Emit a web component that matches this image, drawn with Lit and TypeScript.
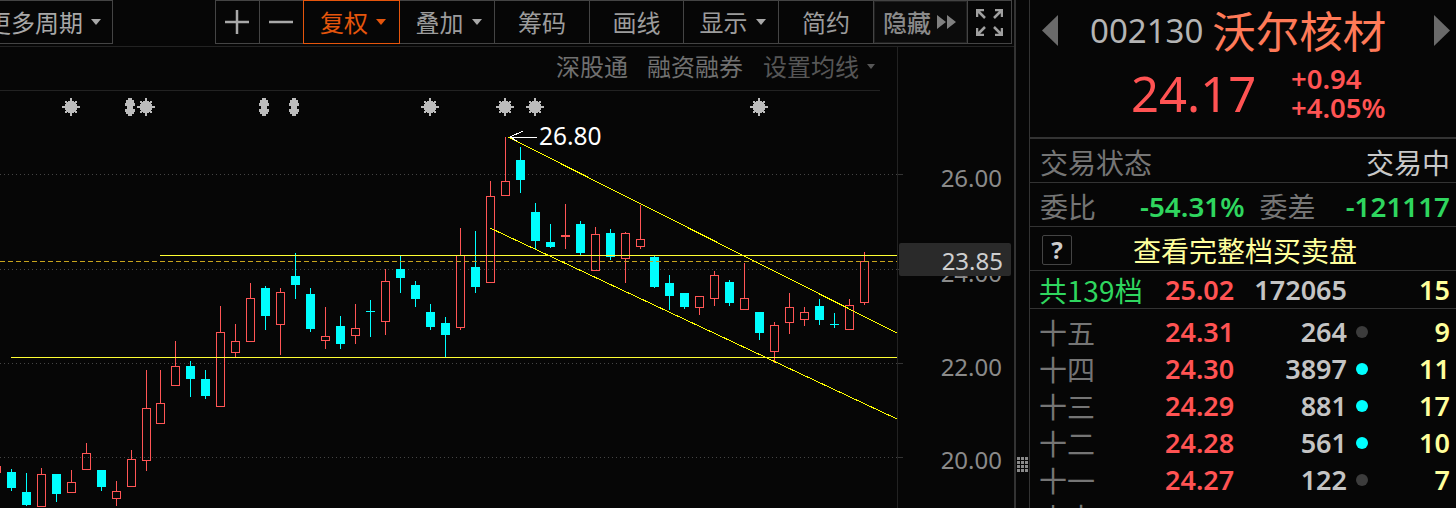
import { LitElement, html, css, svg } from "lit";
import { customElement } from "lit/decorators.js";
import { classMap } from "lit/directives/class-map.js";

type C = [number, number, number, number, number, "r" | "c" | "rd" | "cx"];

const seg = (xo: number, yo: number, list: C[]) =>
  list.map(([x, h, t, b, l, k]) => ({
    x: Math.floor(xo + x / 3) + 0.5,
    h: Math.round(yo + h / 3),
    t: Math.round(yo + t / 3),
    b: Math.round(yo + b / 3),
    l: Math.round(yo + l / 3),
    k,
  }));

const CANDLES = [
  ...seg(0, 240, [
    [-12, 678, 678, 695, 695, "r"],
    [34, 687, 696, 744, 752, "c"],
    [79, 699, 756, 795, 798, "c"],
    [124, 684, 703, 797, 797, "r"],
    [169, 702, 702, 762, 786, "c"],
    [214, 690, 727, 755, 755, "r"],
    [259, 609, 640, 686, 690, "r"],
    [304, 690, 690, 741, 753, "c"],
    [349, 723, 754, 773, 798, "r"],
    [394, 630, 657, 737, 737, "r"],
    [439, 390, 505, 659, 693, "r"],
    [481, 390, 490, 548, 548, "r"],
    [526, 303, 379, 434, 434, "r"],
    [571, 363, 378, 417, 471, "c"],
    [616, 390, 417, 468, 477, "c"],
    [661, 198, 277, 497, 497, "r"],
    [706, 252, 304, 335, 352, "r"],
    [751, 129, 175, 302, 302, "r"],
    [796, 138, 144, 228, 270, "c"],
    [841, 144, 157, 251, 345, "r"],
  ]),
  ...seg(290, 130, [
    [16, 369, 438, 465, 507, "c"],
    [61, 474, 492, 597, 606, "c"],
    [106, 531, 619, 629, 657, "r"],
    [151, 558, 588, 642, 657, "c"],
    [196, 522, 595, 614, 642, "r"],
    [241, 510, 544, 544, 621, "cx"],
    [286, 418, 454, 572, 615, "r"],
    [331, 378, 417, 444, 489, "c"],
    [376, 453, 465, 507, 531, "c"],
    [421, 522, 546, 591, 600, "c"],
    [466, 561, 579, 615, 682, "c"],
    [511, 294, 376, 590, 600, "r"],
    [556, 303, 411, 471, 489, "c"],
    [601, 153, 199, 455, 455, "r"],
    [646, 22, 154, 194, 194, "r"],
    [691, 52, 90, 150, 189, "c"],
    [736, 219, 246, 333, 360, "c"],
    [781, 282, 336, 351, 354, "c"],
    [826, 222, 315, 320, 357, "rd"],
    [871, 273, 282, 369, 375, "c"],
  ]),
  ...seg(590, 190, [
    [16, 111, 133, 239, 239, "r"],
    [61, 117, 129, 201, 210, "c"],
    [106, 126, 130, 203, 279, "r"],
    [151, 45, 148, 167, 177, "r"],
    [193, 198, 201, 291, 294, "c"],
    [238, 255, 279, 318, 360, "c"],
    [283, 309, 309, 351, 357, "c"],
    [328, 319, 319, 350, 375, "r"],
    [373, 243, 256, 323, 348, "r"],
    [418, 270, 276, 339, 348, "c"],
    [463, 219, 325, 356, 356, "r"],
    [508, 366, 366, 429, 450, "c"],
    [553, 396, 406, 482, 518, "r"],
    [598, 309, 352, 395, 432, "r"],
    [643, 351, 367, 386, 408, "r"],
    [688, 327, 348, 390, 405, "c"],
    [733, 369, 403, 403, 414, "cx"],
    [778, 327, 346, 416, 420, "r"],
    [823, 186, 214, 335, 345, "r"],
  ]),
];

const STARS = [71, 146, 430, 505, 535, 759];
const CAPS = [130, 264, 294];
const GRID = [174.5, 269.5, 363.5, 457.5];
const AXIS = [
  { y: 187, t: "26.00" },
  { y: 282, t: "24.00" },
  { y: 376, t: "22.00" },
  { y: 469, t: "20.00" },
];

const TOOLS = [
  { t: "复权", w: "w96", on: true, caret: true },
  { t: "叠加", w: "w95", caret: true },
  { t: "筹码", w: "w95" },
  { t: "画线", w: "w94" },
  { t: "显示", w: "w95", caret: true },
  { t: "简约", w: "w95" },
];

const BOOK = [
  { n: "十五", p: "24.31", q: "264", d: 0, c: "9" },
  { n: "十四", p: "24.30", q: "3897", d: 1, c: "11" },
  { n: "十三", p: "24.29", q: "881", d: 1, c: "17" },
  { n: "十二", p: "24.28", q: "561", d: 1, c: "10" },
  { n: "十一", p: "24.27", q: "122", d: 0, c: "7" },
  { n: "卖十", p: "24.26", q: "588", d: 0, c: "17" },
];

@customElement("app-root")
export class AppRoot extends LitElement {
  static styles = css`
    :host {
      display: block;
      width: 1456px;
      height: 508px;
      overflow: hidden;
      background: #060606;
      font-family: "Noto Sans CJK SC", "Noto Sans", sans-serif;
      color: #999;
    }
    .app {
      display: flex;
      height: 508px;
    }
    .main {
      width: 1014px;
      flex: none;
      border-right: 2px solid #333;
      display: flex;
      flex-direction: column;
    }
    .toolbar {
      height: 47px;
      flex: none;
      box-sizing: border-box;
      border-bottom: 1px solid #222;
      display: flex;
    }
    .btn {
      height: 44px;
      box-sizing: border-box;
      border: 1px solid #444;
      margin-left: -1px;
      display: flex;
      align-items: center;
      justify-content: center;
      gap: 8px;
      font-size: 24px;
      line-height: 1;
      color: #9c9c9c;
      flex: none;
      white-space: nowrap;
    }
    .carets { padding-left: 3px; }
    .period {
      width: 113px;
      margin-left: 0;
      border-left: none;
      justify-content: flex-end;
      padding-right: 11px;
      margin-right: 103px;
      color: #a8a8a8;
      overflow: hidden;
    }
    .period span { flex: none; }
    .w44 { width: 45px; }
    .plus { padding-right: 2px; }
    .w94 { width: 95px; }
    .w95 { width: 96px; }
    .w96 { width: 97px; }
    .on {
      border-color: #e5550c;
      color: #e5550c;
      position: relative;
    }
    .hide {
      width: 95px;
      background: #0b0b0b;
      box-shadow: inset 0 0 0 1px #1e1e1e;
      color: #8a8a8a;
      gap: 6px;
      font-weight: 500;
      padding-right: 2px;
    }
    .full { width: 45px; }
    .caret {
      width: 0;
      height: 0;
      border-left: 5px solid transparent;
      border-right: 5px solid transparent;
      border-top: 6px solid #a8a8a8;
      flex: none;
    }
    .on .caret { border-top-color: #e5550c; }
    .subbar {
      height: 44px;
      width: 898px;
      flex: none;
      box-sizing: border-box;
      border-right: 1px solid #222;
    }
    .subrow {
      width: 880px;
      height: 44px;
      box-sizing: border-box;
      border-bottom: 1px solid #222;
      display: flex;
      align-items: center;
      justify-content: flex-end;
      padding: 0 5px 5px 0;
      font-size: 24px;
      line-height: 1;
      color: #707070;
    }
    .subrow span + span { margin-left: 19px; }
    .subrow .dim { margin-left: 20px; color: #565656; display: flex; align-items: center; gap: 8px; }
    .dim .caret { border-top-color: #565656; border-left-width: 4px; border-right-width: 4px; border-top-width: 5px; }
    .chart {
      width: 1014px;
      height: 417px;
      display: block;
      flex: none;
    }
    .ax { font: 24px "Noto Sans", sans-serif; fill: #8a8a8a; text-anchor: end; }
    .ax.now { fill: #cfcfcf; }
    .hi { font: 24.5px "Noto Sans", sans-serif; fill: #fff; }
    .strip {
      width: 13px;
      flex: none;
      border-right: 1px solid #333;
      padding-top: 457px;
      box-sizing: content-box;
    }
    .grip {
      display: grid;
      grid-template-columns: repeat(3, 3px);
      grid-auto-rows: 3px;
      gap: 1px;
      justify-content: center;
    }
    .grip i { background: #8a8a8a; }
    .side {
      flex: 1;
      min-width: 0;
      display: flex;
      flex-direction: column;
    }
    .head {
      height: 60px;
      flex: none;
      display: flex;
      align-items: center;
      padding: 0 6px 0 12px;
    }
    .code {
      font: 33px "Noto Sans", sans-serif;
      color: #b4b4b4;
      margin-left: 32px;
    }
    .name {
      font-size: 43.5px;
      line-height: 1;
      color: #ff7a58;
      margin-left: 9px;
    }
    .push { flex: 1; }
    .quote {
      height: 79px;
      flex: none;
      box-sizing: border-box;
      border-bottom: 2px solid #333;
      display: flex;
      align-items: center;
      padding: 0 0 11px 101px;
      color: #ff5353;
      font-family: "Noto Sans", sans-serif;
    }
    .price { font-size: 49px; line-height: 1; width: 160px; }
    .delta { font-size: 27.5px; font-weight: 600; line-height: 29px; }
    .row {
      height: 44px;
      flex: none;
      box-sizing: border-box;
      border-bottom: 1px solid #333;
      display: flex;
      align-items: center;
      padding: 2px 6px 0 10px;
      font-size: 28px;
      line-height: 1;
      color: #757575;
    }
    .row .num { font: 600 27.8px "Noto Sans", sans-serif; color: #2fd65f; }
    .mid { margin-left: auto; }
    .gap44 { margin-left: 44px; }
    .gap15 { margin-left: 15px; }
    .white { color: #c8c8c8; margin-left: auto; }
    .help {
      width: 30px;
      height: 30px;
      box-sizing: border-box;
      border: 1px solid #444;
      border-radius: 2px;
      margin-left: 2px;
      color: #ccc;
      font: 700 24px "Noto Sans", sans-serif;
      display: flex;
      align-items: center;
      justify-content: center;
    }
    .all { color: #ffff9c; margin-left: 61px; }
    .book {
      display: grid;
      grid-template-columns: 125px 70px 112px 30px 1fr;
      align-items: center;
      padding: 0 6px 0 10px;
      font: 600 27px/37px "Noto Sans", sans-serif;
    }
    .book .lab {
      font: 400 28px/37px "Noto Sans CJK SC", sans-serif;
      color: #757575;
      white-space: nowrap;
      margin-left: -1px;
    }
    .total {
      height: 38px;
      flex: none;
      box-sizing: border-box;
      border-bottom: 1px solid #333;
    }
    .total .lab { color: #2fd65f; letter-spacing: 0.3px; }
    .levels { padding-top: 5px; grid-auto-rows: 37px; }
    .px { color: #ff5353; margin-bottom: 2px; }
    .qty { color: #c4c4c4; text-align: right; margin-bottom: 2px; }
    .cnt { color: #ffff9c; text-align: right; margin-bottom: 2px; }
    .dot {
      width: 12px;
      height: 12px;
      border-radius: 50%;
      background: #3c3c3c;
      justify-self: center;
      margin-bottom: 2px;
    }
    .dot.live { background: #00ffff; }
  `;

  private candle(c: (typeof CANDLES)[number]) {
    const col = c.k[0] === "r" ? "#ff5555" : "#00ffff";
    const wick = svg`<line x1=${c.x} x2=${c.x} y1=${c.h} y2=${c.l} stroke=${col}/>`;
    if (c.k === "cx")
      return svg`${wick}<line x1=${c.x - 4.5} x2=${c.x + 4.5} y1=${c.t + 0.5} y2=${c.t + 0.5} stroke=${col}/>`;
    if (c.k === "rd")
      return svg`${wick}<rect x=${c.x - 4.5} y=${c.t} width="9" height=${c.b - c.t} fill=${col}/>`;
    if (c.k === "c")
      return svg`${wick}<rect x=${c.x - 4.5} y=${c.t} width="9" height=${c.b - c.t} fill=${col}/>`;
    return svg`<line x1=${c.x} x2=${c.x} y1=${c.h} y2=${c.t} stroke=${col}/>
      <line x1=${c.x} x2=${c.x} y1=${c.b} y2=${c.l} stroke=${col}/>
      <rect x=${c.x - 4} y=${c.t + 0.5} width="8" height=${c.b - c.t} fill="none" stroke=${col}/>`;
  }

  private star(x: number) {
    const y = 107;
    const rays = [0, 1, 2, 3, 4, 5, 6, 7].map((i) => {
      const a = (i * Math.PI) / 4;
      const r = i % 2 ? 8 : 9;
      return svg`<line x1=${x} y1=${y} x2=${x + Math.cos(a) * r} y2=${y + Math.sin(a) * r}/>`;
    });
    return svg`<g stroke="#bcbcbc" stroke-width="2.2" fill="#bcbcbc"><circle cx=${x} cy=${y} r="6.5" stroke="none"/>${rays}</g>`;
  }

  private capsule(x: number) {
    const d = `M${x - 2} 98h4v2h2v3h1v3h-2v3h2v3h-1v2h-2v2h-4v-2h-2v-2h-1v-3h2v-3h-2v-3h1v-3h2z`;
    return svg`<path d=${d} fill="#bcbcbc"/>`;
  }

  private chart() {
    return html`<svg class="chart" viewBox="0 91 1014 417">
      <g shape-rendering="crispEdges">
        ${GRID.map(
          (y) => svg`<line x1="0" x2="897" y1=${y} y2=${y} stroke="#444" stroke-dasharray="1 3"/>
            <line x1="898" x2="903" y1=${y} y2=${y} stroke="#333"/>`
        )}
        <line x1="897.5" x2="897.5" y1="91" y2="508" stroke="#222"/>
        ${CANDLES.map((c) => this.candle(c))}
        <line x1="160" x2="897" y1="255.5" y2="255.5" stroke="#ffff33"/>
        <line x1="0" x2="897" y1="261.5" y2="261.5" stroke="#c8a41c" stroke-dasharray="5 3"/>
        <line x1="11" x2="897" y1="357.5" y2="357.5" stroke="#ffff33"/>
        <line x1="508" y1="137" x2="897" y2="333" stroke="#ffff00"/>
        <line x1="490" y1="228" x2="897" y2="419" stroke="#ffff00"/>
        <g stroke="#fff">
          <line x1="510" x2="537" y1="137.5" y2="137.5"/>
          <line x1="510" y1="137" x2="523" y2="131"/>
          <line x1="510" y1="137" x2="517" y2="141"/>
        </g>
        ${STARS.map((x) => this.star(x))}
        ${CAPS.map((x) => this.capsule(x))}
      </g>
      <text class="hi" x="539" y="145">26.80</text>
      ${AXIS.map((a) => svg`<text class="ax" x="1002" y=${a.y}>${a.t}</text>`)}
      <rect x="899" y="243" width="112" height="33" rx="2" fill="#2a2a2a"/>
      <text class="ax now" x="1003" y="270">23.85</text>
    </svg>`;
  }

  private level(r: (typeof BOOK)[number]) {
    return html`<span class="lab">${r.n}</span><span class="px">${r.p}</span
      ><span class="qty">${r.q}</span
      ><span class=${classMap({ dot: true, live: !!r.d })}></span
      ><span class="cnt">${r.c}</span>`;
  }

  render() {
    return html`<div class="app">
      <div class="main">
        <div class="toolbar">
          <div class="btn period"><span>更多周期</span><i class="caret"></i></div>
          <div class="btn w44 plus">
            <svg width="24" height="24" viewBox="0 0 24 24" stroke="#a8a8a8" stroke-width="2.5"><path d="M0 12H24M12 0V24"/></svg>
          </div>
          <div class="btn w44 plus">
            <svg width="24" height="24" viewBox="0 0 24 24" stroke="#a8a8a8" stroke-width="2.5"><path d="M0 12H24"/></svg>
          </div>
          ${TOOLS.map(
            (b) => html`<div class=${classMap({ btn: true, [b.w]: true, on: !!b.on, carets: !!b.caret })}>
              <span>${b.t}</span>${b.caret ? html`<i class="caret"></i>` : ""}
            </div>`
          )}
          <div class="btn hide">
            <span>隐藏</span>
            <svg width="19" height="14" viewBox="0 0 19 14" fill="#808080"><path d="M0 0L9 7L0 14ZM10 0L19 7L10 14Z"/></svg>
          </div>
          <div class="btn full">
            <svg width="27" height="27" viewBox="0 0 27 27" fill="none" stroke="#a0a0a0" stroke-width="2.5">
              <path d="M1 8V1H8M1 1L9 9"/><path d="M19 1H26V8M26 1L18 9"/>
              <path d="M1 19V26H8M1 26L9 18"/><path d="M19 26H26V19M26 26L18 18"/>
            </svg>
          </div>
        </div>
        <div class="subbar">
          <div class="subrow">
            <span>深股通</span><span>融资融券</span>
            <span class="dim">设置均线<i class="caret"></i></span>
          </div>
        </div>
        ${this.chart()}
      </div>
      <div class="strip">
        <div class="grip">
          ${Array.from({ length: 12 }, () => html`<i></i>`)}
        </div>
      </div>
      <div class="side">
        <div class="head">
          <svg width="16" height="31" viewBox="0 0 16 31" fill="#6a6a6a"><path d="M16 0V31L0 15.5Z"/></svg>
          <span class="code">002130</span>
          <span class="name">沃尔核材</span>
          <span class="push"></span>
          <svg width="16" height="31" viewBox="0 0 16 31" fill="#6a6a6a"><path d="M0 0V31L16 15.5Z"/></svg>
        </div>
        <div class="quote">
          <div class="price">24.17</div>
          <div class="delta">+0.94<br />+4.05%</div>
        </div>
        <div class="row"><span>交易状态</span><span class="white">交易中</span></div>
        <div class="row">
          <span>委比</span><span class="num gap44">-54.31%</span>
          <span class="gap15">委差</span><span class="num mid">-121117</span>
        </div>
        <div class="row">
          <span class="help">?</span><span class="all">查看完整档买卖盘</span>
        </div>
        <div class="book total">
          <span class="lab">共139档</span><span class="px">25.02</span
          ><span class="qty">172065</span><span></span><span class="cnt">15</span>
        </div>
        <div class="book levels">${BOOK.map((r) => this.level(r))}</div>
      </div>
    </div>`;
  }
}
